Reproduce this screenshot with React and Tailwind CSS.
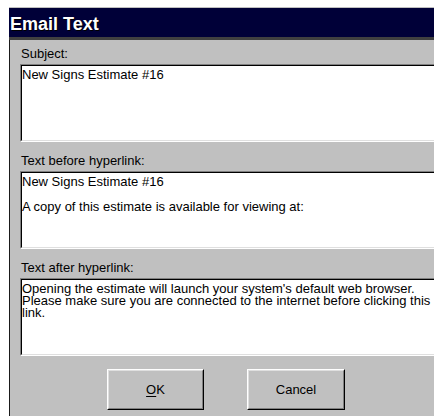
import React from "react"

const font = { fontFamily: '"Liberation Sans", Arial, sans-serif' }

// Sunken text area with the classic two-tone bevel
function Field({ lines, leading = "leading-[12.5px]" }) {
  return (
    <div className="h-[78px] w-[440px] border-t border-l border-[#808080] border-b border-r border-b-white border-r-white">
      <div className="h-full w-full border-t border-l border-black border-b border-r border-b-[#dfdfdf] border-r-[#dfdfdf] bg-white">
        <div className={`pt-[3px] pl-0 text-[13px] ${leading} text-black`}>
          {lines.map((line, i) => (
            <div key={i} className="whitespace-nowrap">
              {line === "" ? "\u00a0" : line}
            </div>
          ))}
        </div>
      </div>
    </div>
  )
}

function Label({ children, className = "" }) {
  return <div className={`ml-[1px] h-[13px] text-[13px] leading-[13px] text-black ${className}`}>{children}</div>
}

function Button({ children, width }) {
  return (
    <button className={`${width} h-[41px] border-t border-l border-white border-b border-r border-b-black border-r-black bg-[#c0c0c0] p-0`}>
      <div className="flex h-full w-full items-center justify-center border-t border-l border-[#dfdfdf] border-b border-r border-b-[#808080] border-r-[#808080] text-[13px] leading-[13px] text-black">
        {children}
      </div>
    </button>
  )
}

export default function App() {
  return (
    <div className="relative h-[416px] w-[434px] overflow-hidden bg-white" style={font}>
      <div className="ml-[9px] mt-[7px] w-[480px]">
        {/* Title bar */}
        <div className="border-t border-[#c0c0c0] bg-[#000038]">
          <div className="h-[29px] pl-[1px] pt-[7px] text-[18px] font-bold leading-[18px] text-white [text-shadow:1px_1px_0_#000]">
            Email Text
          </div>
        </div>
        <div className="h-[3px] bg-[#404040]" />

        {/* Client area */}
        <div className="h-[400px] border-l border-[#1a1a1a] bg-[#c0c0c0] pl-[10px] pt-[7px]">
          <Label>Subject:</Label>
          <div className="mt-[4px]">
            <Field lines={["New Signs Estimate #16"]} />
          </div>

          <Label className="mt-[12px]">Text before hyperlink:</Label>
          <div className="mt-[4px]">
            <Field lines={["New Signs Estimate #16", "", "A copy of this estimate is available for viewing at:"]} />
          </div>

          <Label className="mt-[12px]">Text after hyperlink:</Label>
          <div className="mt-[4px]">
            <Field
              leading="leading-[12px]"
              lines={[
                "Opening the estimate will launch your system's default web browser.",
                "Please make sure you are connected to the internet before clicking this",
                "link.",
              ]}
            />
          </div>

          <div className="ml-[87px] mt-[13px] flex gap-[43px]">
            <Button width="w-[97px]">
              <span>
                <span className="underline underline-offset-2">O</span>K
              </span>
            </Button>
            <Button width="w-[98px]">Cancel</Button>
          </div>
        </div>
      </div>
    </div>
  )
}
